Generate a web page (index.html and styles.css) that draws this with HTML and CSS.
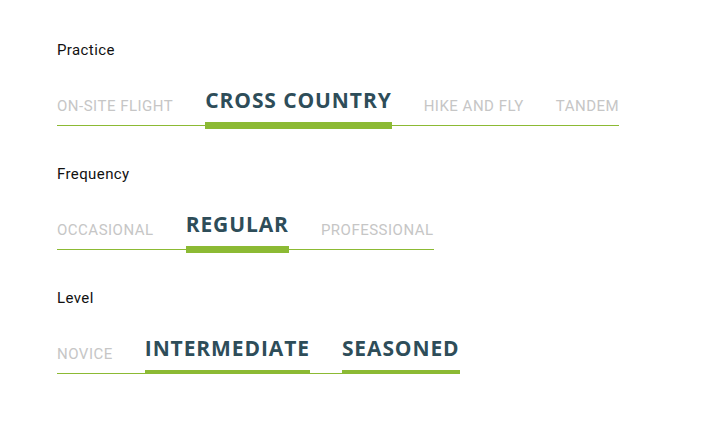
FILE: index.html
```html
<!DOCTYPE html>
<html lang="en">
<head>
<meta charset="utf-8">
<title>Profile filters</title>
<link rel="stylesheet" href="styles.css">
</head>
<body>
<main class="page">
  <section class="group">
    <h2 class="label">Practice</h2>
    <nav class="tabs">
      <span class="tab">ON-SITE FLIGHT</span>
      <span class="tab active">CROSS COUNTRY</span>
      <span class="tab">HIKE AND FLY</span>
      <span class="tab">TANDEM</span>
    </nav>
  </section>
  <section class="group">
    <h2 class="label">Frequency</h2>
    <nav class="tabs">
      <span class="tab">OCCASIONAL</span>
      <span class="tab active">REGULAR</span>
      <span class="tab">PROFESSIONAL</span>
    </nav>
  </section>
  <section class="group">
    <h2 class="label">Level</h2>
    <nav class="tabs">
      <span class="tab">NOVICE</span>
      <span class="tab active">INTERMEDIATE</span>
      <span class="tab active">SEASONED</span>
    </nav>
  </section>
</main>
</body>
</html>
```

FILE: styles.css
```css
html, body {
  margin: 0;
  padding: 0;
  background: #ffffff;
}

body {
  font-family: Roboto, "Liberation Sans", sans-serif;
}

.page {
  padding: 40px 0 0 57px;
  display: flex;
  flex-direction: column;
  align-items: flex-start;
  gap: 38px;
}

.group {
  display: flex;
  flex-direction: column;
  align-items: flex-start;
  gap: 30px;
}

.label {
  margin: 0;
  font-size: 15px;
  line-height: 20px;
  font-weight: 400;
  letter-spacing: 0.4px;
  color: #111111;
}

.tabs {
  display: flex;
  align-items: flex-end;
  gap: 32px;
  border-bottom: 1px solid #8cba34;
}

.tab {
  font-size: 15px;
  line-height: 15px;
  padding-bottom: 11px;
  color: #c6c6c6;
  letter-spacing: 0.5px;
  white-space: nowrap;
}

.tab.active {
  font-family: "Open Sans", Roboto, sans-serif;
  font-size: 21px;
  line-height: 20px;
  font-weight: 700;
  color: #2e4d59;
  padding-bottom: 12px;
  border-bottom: 7px solid #8cba34;
  margin-bottom: -4px;
  letter-spacing: 0.9px;
}
```
